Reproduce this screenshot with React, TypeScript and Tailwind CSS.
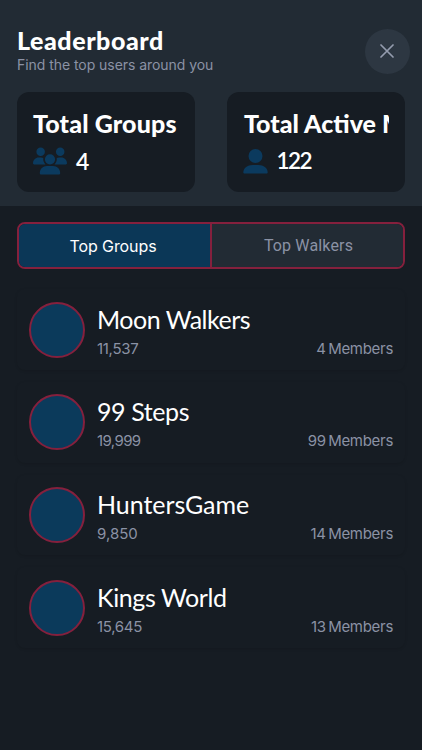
import { FaUsers } from "react-icons/fa6";

type Group = {
  name: string;
  nameClass: string;
  steps: string;
  stepsClass: string;
  members: number;
};

const groups: Group[] = [
  { name: "Moon Walkers", nameClass: "tracking-[-0.5px]", steps: "11,537", stepsClass: "tracking-[-0.3px]", members: 4 },
  { name: "99 Steps", nameClass: "tracking-[-0.4px]", steps: "19,999", stepsClass: "tracking-[-0.6px]", members: 99 },
  { name: "HuntersGame", nameClass: "tracking-[-0.05px]", steps: "9,850", stepsClass: "tracking-[0px]", members: 14 },
  { name: "Kings World", nameClass: "tracking-[-0.4px]", steps: "15,645", stepsClass: "tracking-[-0.3px]", members: 13 },
];

function UserIcon() {
  return (
    <svg className="h-[25px] w-[25px] shrink-0" viewBox="0 0 25 25" fill="#0b3a5e">
      <circle cx="12.5" cy="7" r="7" />
      <path d="M9.5 16h6c5 0 9 3 9.2 7.2 0 .9-.5 1.4-1.3 1.4H1.6C.8 24.6.3 24.1.3 23.2.5 19 4.5 16 9.5 16Z" />
    </svg>
  );
}

function GroupRow({ group }: { group: Group }) {
  return (
    <li className="flex h-[80.7px] items-center rounded-lg px-3 shadow-[0_1px_3px_rgba(0,0,0,0.12)]">
      <div className="h-14 w-14 shrink-0 rounded-full border-2 border-[#85203d] bg-[#0b3a5b]" />
      <div className="ml-3 flex-1 pt-[2px]">
        <h3 className={`w-fit text-[25px] leading-8 whitespace-nowrap text-white ${group.nameClass}`}>{group.name}</h3>
        <div className="mt-1 flex justify-between font-['Inter',sans-serif] text-[15px] leading-5 text-[#8b92a5]">
          <span className={group.stepsClass}>{group.steps}</span>
          <span className="tracking-[-0.3px] [word-spacing:-1.5px]">{group.members} Members</span>
        </div>
      </div>
    </li>
  );
}

export default function App() {
  return (
    <div className="h-[750px] w-[422px] overflow-hidden bg-[#161c23] font-['Lato',sans-serif] text-white">
      <header className="h-[206px] bg-[#222b34] px-[17px] pt-[26px]">
        <div className="flex h-[66px] justify-between">
          <div>
            <h1 className="w-fit text-[25px] leading-[28px] font-black tracking-[0.55px]">Leaderboard</h1>
            <p className="mt-px w-fit font-['Inter',sans-serif] text-[14px] leading-5 tracking-[-0.05px] text-[#8b92a5]">Find the top users around you</p>
          </div>
          <button className="mt-[2.5px] -mr-[4.5px] flex h-[45px] w-[45px] items-center justify-center rounded-full bg-[#2d3742]">
            <svg className="h-[14px] w-[14px]" viewBox="0 0 14 14" stroke="#949cae" strokeWidth="1.7" strokeLinecap="round">
              <path d="M1 1l12 12M13 1L1 13" />
            </svg>
          </button>
        </div>
        <div className="flex gap-8">
          <section className="h-[100px] w-[178px] rounded-xl bg-[#161c23] px-4 pt-[15px]">
            <h2 className="w-fit text-[25px] leading-8 font-black tracking-[0.15px] whitespace-nowrap">Total Groups</h2>
            <div className="mt-[6px] flex h-8 items-center">
              <FaUsers className="h-[34px] w-[34px] text-[#0b3a5e]" />
              <span className="ml-[9px] text-[23px] font-semibold">4</span>
            </div>
          </section>
          <section className="h-[100px] w-[178px] rounded-xl bg-[#161c23] px-4 pt-[15px]">
            <h2 className="overflow-hidden pl-px text-[25px] leading-8 font-black whitespace-nowrap">Total Active Members</h2>
            <div className="mt-[6px] flex h-8 items-center">
              <UserIcon />
              <span className="ml-[8.500px] text-[22.5px] font-semibold tracking-[-1.6px]">122</span>
            </div>
          </section>
        </div>
      </header>

      <main className="px-[17px] pt-4">
        <div className="flex h-[47px] w-[388px] overflow-hidden rounded-lg border-2 border-[#85203d] text-[16px]">
          <button className="w-[193px] border-r-2 border-[#85203d] bg-[#0b3757] pr-[3px] font-['Inter',sans-serif] tracking-[-0.1px]">Top Groups</button>
          <button className="flex-1 bg-[#222b34] pt-px pl-[2px] font-['Roboto',sans-serif] tracking-[0.15px] text-[#8b92a5]">Top Walkers</button>
        </div>
        <ul className="mt-[20.4px] flex flex-col gap-3">
          {groups.map((group) => (
            <GroupRow key={group.name} group={group} />
          ))}
        </ul>
      </main>
    </div>
  );
}
